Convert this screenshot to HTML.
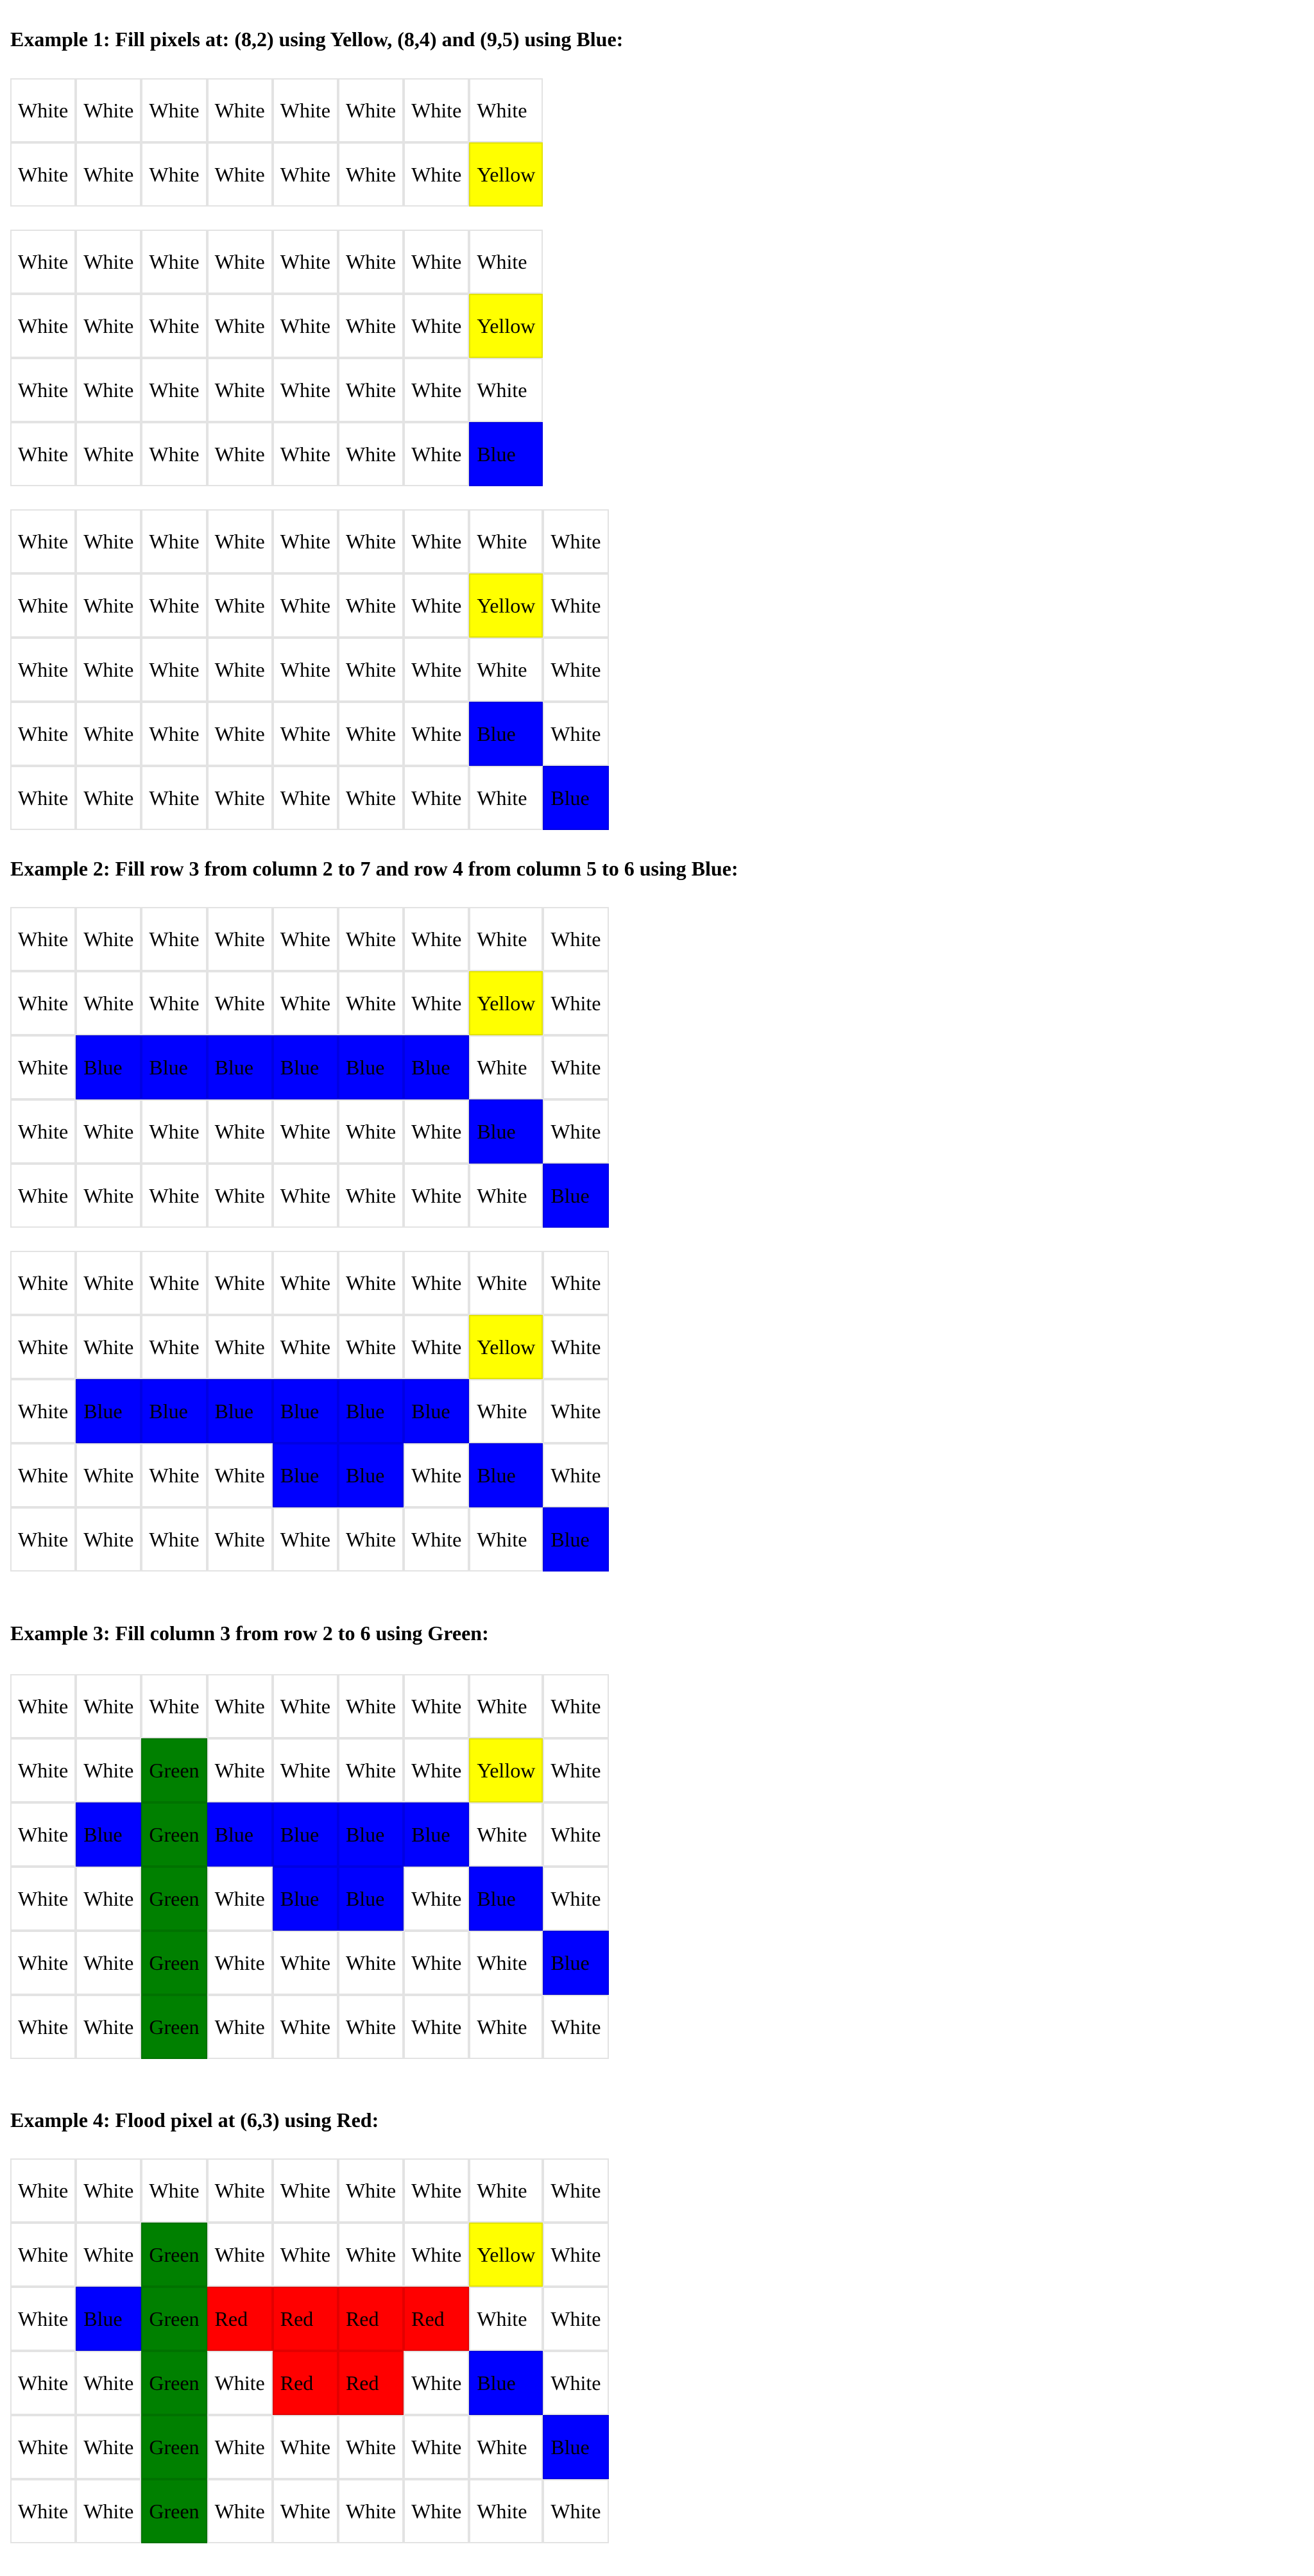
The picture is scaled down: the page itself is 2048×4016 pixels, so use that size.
<!DOCTYPE html>
<html><head><meta charset="utf-8">
<style>
html,body{margin:0;padding:0;background:#fff;width:2048px;height:4016px;overflow:hidden}
body{position:relative;font-family:"Liberation Serif",serif;color:#000}
.h{position:absolute;left:16px;font-weight:bold;font-size:32px;line-height:40px;margin:0;white-space:nowrap}
table{position:absolute;left:16px;border-collapse:separate;border-spacing:0}
td{border:2px solid rgba(0,0,0,0.11);padding:0 10px;height:100px;box-sizing:border-box;font-size:32px;line-height:36px;text-align:left;vertical-align:middle;white-space:nowrap;background:#fff}
td.y{background:#ffff00}
td.b{background:#0000ff}
td.g{background:#008000}
td.r{background:#ff0000}
</style></head><body>

<div class="h" style="top:41px">Example 1: Fill pixels at: (8,2) using Yellow, (8,4) and (9,5) using Blue:</div>

<table style="top:122px">
<tr><td>White</td><td>White</td><td>White</td><td>White</td><td>White</td><td>White</td><td>White</td><td>White</td></tr>
<tr><td>White</td><td>White</td><td>White</td><td>White</td><td>White</td><td>White</td><td>White</td><td class="y">Yellow</td></tr>
</table>

<table style="top:358px">
<tr><td>White</td><td>White</td><td>White</td><td>White</td><td>White</td><td>White</td><td>White</td><td>White</td></tr>
<tr><td>White</td><td>White</td><td>White</td><td>White</td><td>White</td><td>White</td><td>White</td><td class="y">Yellow</td></tr>
<tr><td>White</td><td>White</td><td>White</td><td>White</td><td>White</td><td>White</td><td>White</td><td>White</td></tr>
<tr><td>White</td><td>White</td><td>White</td><td>White</td><td>White</td><td>White</td><td>White</td><td class="b">Blue</td></tr>
</table>

<table style="top:794px">
<tr><td>White</td><td>White</td><td>White</td><td>White</td><td>White</td><td>White</td><td>White</td><td>White</td><td>White</td></tr>
<tr><td>White</td><td>White</td><td>White</td><td>White</td><td>White</td><td>White</td><td>White</td><td class="y">Yellow</td><td>White</td></tr>
<tr><td>White</td><td>White</td><td>White</td><td>White</td><td>White</td><td>White</td><td>White</td><td>White</td><td>White</td></tr>
<tr><td>White</td><td>White</td><td>White</td><td>White</td><td>White</td><td>White</td><td>White</td><td class="b">Blue</td><td>White</td></tr>
<tr><td>White</td><td>White</td><td>White</td><td>White</td><td>White</td><td>White</td><td>White</td><td>White</td><td class="b">Blue</td></tr>
</table>

<div class="h" style="top:1334px">Example 2: Fill row 3 from column 2 to 7 and row 4 from column 5 to 6 using Blue:</div>

<table style="top:1414px">
<tr><td>White</td><td>White</td><td>White</td><td>White</td><td>White</td><td>White</td><td>White</td><td>White</td><td>White</td></tr>
<tr><td>White</td><td>White</td><td>White</td><td>White</td><td>White</td><td>White</td><td>White</td><td class="y">Yellow</td><td>White</td></tr>
<tr><td>White</td><td class="b">Blue</td><td class="b">Blue</td><td class="b">Blue</td><td class="b">Blue</td><td class="b">Blue</td><td class="b">Blue</td><td>White</td><td>White</td></tr>
<tr><td>White</td><td>White</td><td>White</td><td>White</td><td>White</td><td>White</td><td>White</td><td class="b">Blue</td><td>White</td></tr>
<tr><td>White</td><td>White</td><td>White</td><td>White</td><td>White</td><td>White</td><td>White</td><td>White</td><td class="b">Blue</td></tr>
</table>

<table style="top:1950px">
<tr><td>White</td><td>White</td><td>White</td><td>White</td><td>White</td><td>White</td><td>White</td><td>White</td><td>White</td></tr>
<tr><td>White</td><td>White</td><td>White</td><td>White</td><td>White</td><td>White</td><td>White</td><td class="y">Yellow</td><td>White</td></tr>
<tr><td>White</td><td class="b">Blue</td><td class="b">Blue</td><td class="b">Blue</td><td class="b">Blue</td><td class="b">Blue</td><td class="b">Blue</td><td>White</td><td>White</td></tr>
<tr><td>White</td><td>White</td><td>White</td><td>White</td><td class="b">Blue</td><td class="b">Blue</td><td>White</td><td class="b">Blue</td><td>White</td></tr>
<tr><td>White</td><td>White</td><td>White</td><td>White</td><td>White</td><td>White</td><td>White</td><td>White</td><td class="b">Blue</td></tr>
</table>

<div class="h" style="top:2526px">Example 3: Fill column 3 from row 2 to 6 using Green:</div>

<table style="top:2610px">
<tr><td>White</td><td>White</td><td>White</td><td>White</td><td>White</td><td>White</td><td>White</td><td>White</td><td>White</td></tr>
<tr><td>White</td><td>White</td><td class="g">Green</td><td>White</td><td>White</td><td>White</td><td>White</td><td class="y">Yellow</td><td>White</td></tr>
<tr><td>White</td><td class="b">Blue</td><td class="g">Green</td><td class="b">Blue</td><td class="b">Blue</td><td class="b">Blue</td><td class="b">Blue</td><td>White</td><td>White</td></tr>
<tr><td>White</td><td>White</td><td class="g">Green</td><td>White</td><td class="b">Blue</td><td class="b">Blue</td><td>White</td><td class="b">Blue</td><td>White</td></tr>
<tr><td>White</td><td>White</td><td class="g">Green</td><td>White</td><td>White</td><td>White</td><td>White</td><td>White</td><td class="b">Blue</td></tr>
<tr><td>White</td><td>White</td><td class="g">Green</td><td>White</td><td>White</td><td>White</td><td>White</td><td>White</td><td>White</td></tr>
</table>

<div class="h" style="top:3285px">Example 4: Flood pixel at (6,3) using Red:</div>

<table style="top:3365px">
<tr><td>White</td><td>White</td><td>White</td><td>White</td><td>White</td><td>White</td><td>White</td><td>White</td><td>White</td></tr>
<tr><td>White</td><td>White</td><td class="g">Green</td><td>White</td><td>White</td><td>White</td><td>White</td><td class="y">Yellow</td><td>White</td></tr>
<tr><td>White</td><td class="b">Blue</td><td class="g">Green</td><td class="r">Red</td><td class="r">Red</td><td class="r">Red</td><td class="r">Red</td><td>White</td><td>White</td></tr>
<tr><td>White</td><td>White</td><td class="g">Green</td><td>White</td><td class="r">Red</td><td class="r">Red</td><td>White</td><td class="b">Blue</td><td>White</td></tr>
<tr><td>White</td><td>White</td><td class="g">Green</td><td>White</td><td>White</td><td>White</td><td>White</td><td>White</td><td class="b">Blue</td></tr>
<tr><td>White</td><td>White</td><td class="g">Green</td><td>White</td><td>White</td><td>White</td><td>White</td><td>White</td><td>White</td></tr>
</table>

</body></html>
